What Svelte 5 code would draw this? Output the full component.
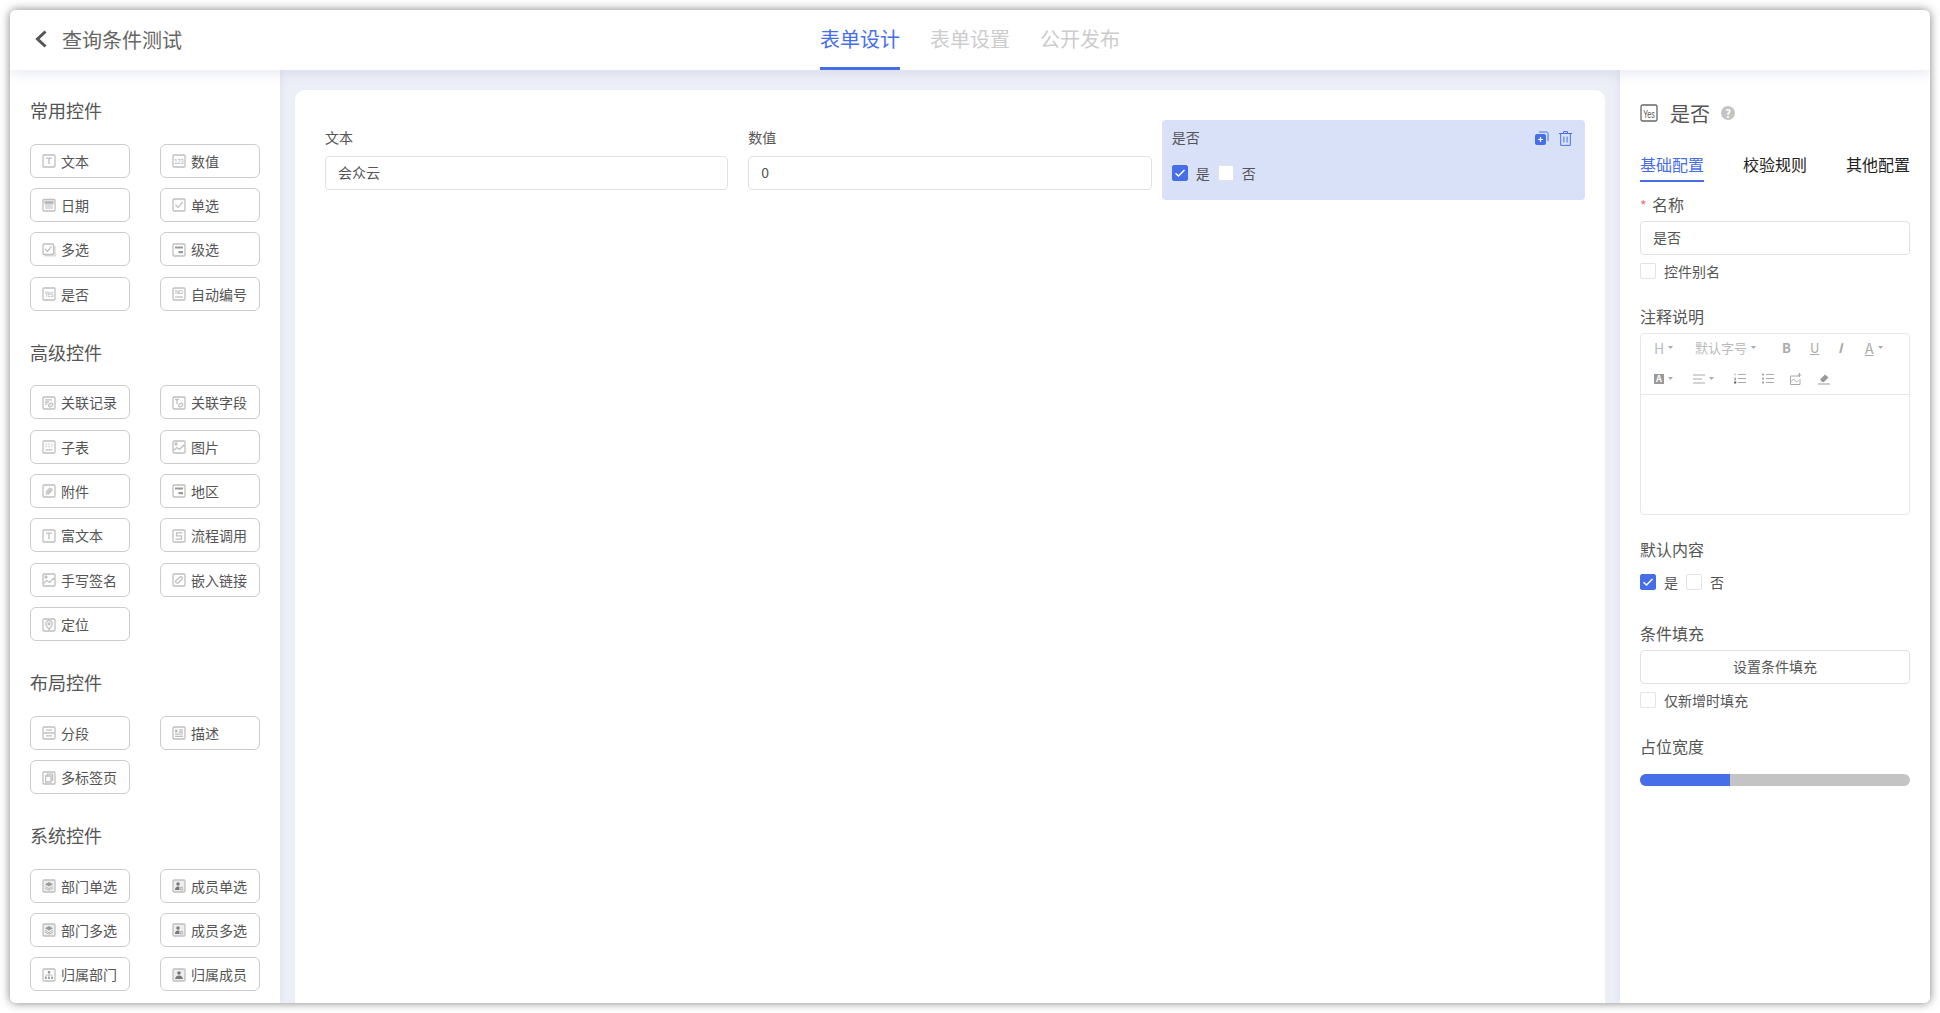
<script>
const icons = {
  text: '<rect x="1" y="1" width="12" height="12" rx="1"/><path d="M4 4.2h6M7 4.2v6"/>',
  num: '<rect x="1" y="1" width="12" height="12" rx="1"/><text transform="translate(7 9.8) scale(.75 1)" font-size="7.500" text-anchor="middle" fill="#aaa" stroke="none" font-family="Liberation Sans, sans-serif">123</text>',
  date: '<rect x="1" y="1.5" width="12" height="11.5" rx="1"/><path d="M3 3.500h8v2H3z" fill="#aaa"/><path d="M3 6h8v5H3z" fill="#ddd" stroke="none"/>',
  radio: '<rect x="1" y="1" width="12" height="12" rx="1"/><path d="M3.500 6.800l2.600 2.800 4.600-5.600"/>',
  multi: '<path d="M2.500 12.500h10.300V3" stroke-width="2" stroke="#ddd"/><rect x="1" y="1" width="10.500" height="10.500" rx="1"/><path d="M3 5.800l2.400 2.600 4-5"/>',
  cascade: '<rect x="1" y="1" width="12" height="12" rx="1"/><path d="M3 3.400h8v2.200H3zM6.500 8h4.500v2.200H6.500z" fill="#999" stroke="none"/>',
  yes: '<rect x="1" y="1" width="12" height="12" rx="1"/><text transform="translate(7 10) scale(.62 1)" font-size="8.500" text-anchor="middle" fill="#aaa" stroke="none" font-family="Liberation Sans, sans-serif">Yes</text>',
  no: '<rect x="1" y="1" width="12" height="12" rx="1"/><text x="7" y="7.400" font-size="5.500" text-anchor="middle" fill="#999" stroke="none" font-family="Liberation Sans, sans-serif">NO</text><path d="M3 10h8"/>',
  relRec: '<rect x="1" y="1" width="12" height="12" rx="1"/><path d="M3 3.800h7M3 6h4M3 8.200h2.500"/><rect x="6.500" y="7.600" width="4.400" height="2.800" rx="1.400" transform="rotate(-35 8.700 9)"/>',
  relField: '<rect x="1" y="1" width="12" height="12" rx="1"/><path d="M3 3.500h4M5 3.500v4.500"/><rect x="6.500" y="7.600" width="4.400" height="2.800" rx="1.400" transform="rotate(-35 8.700 9)"/>',
  table: '<rect x="1" y="1" width="12" height="12" rx="1"/><path d="M3.500 4h1M6.500 4h1M9.500 4h1M3.500 6.500h1M6.500 6.500h1M9.500 6.500h1M3.500 9.800h7"/>',
  image: '<rect x="1" y="1" width="12" height="12" rx="1"/><circle cx="4" cy="4" r="1"/><path d="M1.500 10.500l3.400-3 2.600 2 4-4 1.200 1"/>',
  attach: '<rect x="1" y="1" width="12" height="12" rx="1"/><path d="M4 10.500l5.800-6.200M3.800 8.400l4.400-4.800M6.200 10.400l4.400-4.800" />',
  flow: '<rect x="1" y="1" width="12" height="12" rx="1"/><path d="M10.500 3.800H4.500v3h5v3.400h-6"/>',
  link: '<rect x="1" y="1" width="12" height="12" rx="1"/><rect x="3" y="5.400" width="8" height="3.200" rx="1.600" transform="rotate(-40 7 7)"/>',
  locate: '<rect x="1" y="1" width="12" height="12" rx="1"/><path d="M7 11.200C5 9 3.800 7.400 3.800 5.800a3.200 3.200 0 016.400 0c0 1.600-1.200 3.200-3.200 5.400z"/><circle cx="7" cy="5.800" r="1"/>',
  section: '<rect x="1" y="1" width="12" height="12" rx="1"/><path d="M1.500 7h11M4 4.200h6M4 9.800h6"/>',
  desc: '<rect x="1" y="1" width="12" height="12" rx="1"/><path d="M7 3.800h4M7 6h4M3 8.200h8M3 10.400h8"/><path d="M3 3.500h2.500v3H3z" fill="#bbb" stroke="none"/>',
  tabs: '<rect x="1" y="1" width="12" height="12" rx="1"/><path d="M3.600 5v6h5.400V5zM5.200 5V3.200h5.400v6H9"/>',
  dept: '<rect x="1" y="1" width="12" height="12" rx="1" fill="#eee"/><path d="M7 3l4 2.200-4 2.200-4-2.200z" fill="#999" stroke="none"/><path d="M3 7.400l4 2.200 4-2.200M3 9.200l4 2 4-2" stroke="#aaa" stroke-width=".8"/>',
  member: '<rect x="1" y="1" width="12" height="12" rx="1" fill="#eee"/><circle cx="6" cy="5" r="1.700" fill="#777" stroke="none"/><path d="M3 11c0-2.400 1.200-3.600 3-3.600 1 0 1.400.3 1.400.3V11z" fill="#777" stroke="none"/><path d="M8.400 8.400h2.200V11H8.400z" stroke="#aaa" stroke-width=".8"/>',
  ownDept: '<rect x="1" y="1" width="12" height="12" rx="1"/><path d="M5.800 3h2.400v2.200H5.800zM3 8.800h1.800V11H3zM6.100 8.800h1.800V11H6.100zM9.200 8.800H11V11H9.200z" fill="#999" stroke="none"/><path d="M7 5v3.800M3.900 8.800V7h6.200v1.800" stroke="#aaa" stroke-width=".7"/>',
  ownMember: '<rect x="1" y="1" width="12" height="12" rx="1" fill="#eee"/><circle cx="7" cy="5" r="1.800" fill="#777" stroke="none"/><path d="M3.200 11c0-2.400 1.600-3.600 3.800-3.600s3.800 1.200 3.800 3.600z" fill="#777" stroke="none"/>'
};

const sections = [
  { title: '常用控件', items: [['文本', 'text'], ['数值', 'num'], ['日期', 'date'], ['单选', 'radio'], ['多选', 'multi'], ['级选', 'cascade'], ['是否', 'yes'], ['自动编号', 'no']] },
  { title: '高级控件', items: [['关联记录', 'relRec'], ['关联字段', 'relField'], ['子表', 'table'], ['图片', 'image'], ['附件', 'attach'], ['地区', 'cascade'], ['富文本', 'text'], ['流程调用', 'flow'], ['手写签名', 'image'], ['嵌入链接', 'link'], ['定位', 'locate']] },
  { title: '布局控件', items: [['分段', 'section'], ['描述', 'desc'], ['多标签页', 'tabs']] },
  { title: '系统控件', items: [['部门单选', 'dept'], ['成员单选', 'member'], ['部门多选', 'dept'], ['成员多选', 'member'], ['归属部门', 'ownDept'], ['归属成员', 'ownMember']] }
];

const topTabs = ['表单设计', '表单设置', '公开发布'];
const sideTabs = ['基础配置', '校验规则', '其他配置'];
</script>

{#snippet caret()}
  <svg class="caret" width="5" height="3" viewBox="0 0 5 3"><path d="M0 0h5L2.500 3z" fill="#aaa" /></svg>
{/snippet}

{#snippet yesNo()}
  <div class="yesno">
    <span class="check on">
      <svg width="12" height="10" viewBox="0 0 12 10"><path d="M1.500 5.200l3 2.800 6-6" fill="none" stroke="#fff" stroke-width="1.500" /></svg>
    </span>
    <span class="opt">是</span>
    <span class="check"></span>
    <span class="opt">否</span>
  </div>
{/snippet}

<div class="page">
  <div class="window">
    <header class="topbar">
      <div class="back">
        <svg width="14" height="18" viewBox="0 0 14 18"><path d="M11.500 1.500L3.500 9l8 7.500" fill="none" stroke="#555" stroke-width="3" /></svg>
        <span>查询条件测试</span>
      </div>
      <nav class="top-tabs">
        {#each topTabs as tab, i}
          <div class="top-tab" class:active={i === 0}>{tab}</div>
        {/each}
      </nav>
    </header>

    <main class="body">
      <aside class="palette">
        {#each sections as section}
          <section class="group">
            <h3>{section.title}</h3>
            <div class="grid">
              {#each section.items as item}
                <div class="ctl">
                  <svg width="14" height="14" viewBox="0 0 14 14" fill="none" stroke="#bfbfbf" stroke-width="1.300">{@html icons[item[1]]}</svg>
                  <span>{item[0]}</span>
                </div>
              {/each}
            </div>
          </section>
        {/each}
      </aside>

      <div class="canvas">
        <div class="card">
          <div class="row">
            <div class="field">
              <div class="label">文本</div>
              <div class="input">会众云</div>
            </div>
            <div class="field">
              <div class="label">数值</div>
              <div class="input">0</div>
            </div>
            <div class="field selected">
              <div class="label">是否</div>
              {@render yesNo()}
              <div class="actions">
                <svg width="15" height="15" viewBox="0 0 15 15"><path d="M5 1h7.500A1.500 1.500 0 0114 2.500V10" fill="none" stroke="#466ee8" stroke-width="1" /><rect x="1" y="3" width="11" height="11" rx="2" fill="#466ee8" /><path d="M6.500 6v5M4 8.500h5" stroke="#fff" stroke-width="1.200" /></svg>
                <svg width="13" height="15" viewBox="0 0 13 15" fill="none" stroke="#466ee8" stroke-width="1"><path d="M0 2.500h13M4.500 2.500V.6h4v1.900M1.700 2.500v11.900h9.600V2.500M4.900 5.500v6M8.100 5.500v6" /></svg>
              </div>
            </div>
          </div>
        </div>
      </div>

      <aside class="props">
        <div class="props-head">
          <svg width="18" height="18" viewBox="0 0 18 18" fill="none" stroke="#666" stroke-width="1.300"><rect x="1" y="1" width="16" height="16" rx="1.500" /><text transform="translate(9 13.500) scale(.65 1)" font-size="11" text-anchor="middle" fill="#555" stroke="none" font-family="Liberation Sans, sans-serif">Yes</text></svg>
          <span class="props-title">是否</span>
          <span class="help">?</span>
        </div>
        <div class="side-tabs">
          {#each sideTabs as tab, i}
            <div class="side-tab" class:active={i === 0}>{tab}</div>
          {/each}
        </div>

        <div class="prop-label name"><i>*</i>名称</div>
        <div class="input">是否</div>
        <div class="check-row"><span class="check"></span><span>控件别名</span></div>

        <div class="prop-label note">注释说明</div>
        <div class="editor">
          <div class="toolbar">
            <div class="tool-row first">
              <span class="tool h">H{@render caret()}</span>
              <span class="tool size">默认字号{@render caret()}</span>
              <span class="tool b">B</span>
              <span class="tool u">U</span>
              <span class="tool i">I</span>
              <span class="tool a">A{@render caret()}</span>
            </div>
            <div class="tool-row second">
              <span class="tool bg"><em>A</em>{@render caret()}</span>
              <span class="tool align">
                <svg width="12" height="10" viewBox="0 0 12 10" stroke="#aaa"><path d="M0 1h12M0 5h9M0 9h12" /></svg>{@render caret()}
              </span>
              <svg class="tool-ico ol" width="12" height="11" viewBox="0 0 12 11" stroke="#aaa"><path d="M4 1.500h8M4 5.500h8M4 9.500h8M1 .5v2M.5 5h1.500L.5 7h1.500M.5 8.500h1.500v2H.5" /></svg>
              <svg class="tool-ico" width="12" height="11" viewBox="0 0 12 11" stroke="#aaa"><path d="M4 1.500h8M4 5.500h8M4 9.500h8" /><path d="M0 .5h2v2H0zM0 4.500h2v2H0zM0 8.500h2v2H0z" fill="#aaa" stroke="none" /></svg>
              <svg class="tool-ico" width="12" height="12" viewBox="0 0 12 12" fill="none" stroke="#aaa"><path d="M9 3H.5v8.500H10V6" /><path d="M.5 9l3-3 3 3 2-1.500M9.500 0v4M7.500 2h4" /></svg>
              <svg class="tool-ico" width="12" height="12" viewBox="0 0 12 12"><path d="M2 6.500L7 1.500l3.500 3-4.500 4.500H4z" fill="#999" /><path d="M0 11h12" stroke="#999" /></svg>
            </div>
          </div>
        </div>

        <div class="prop-label def">默认内容</div>
        {@render yesNo()}

        <div class="prop-label cond">条件填充</div>
        <div class="input btn">设置条件填充</div>
        <div class="check-row"><span class="check"></span><span>仅新增时填充</span></div>

        <div class="prop-label span">占位宽度</div>
        <div class="slider"><div class="slider-fill" style="width: 33.33%"></div></div>
      </aside>
    </main>
  </div>
</div>

<style>
:global(body) {
  margin: 0;
  background: #fff;
  overflow: hidden;
}

.page {
  box-sizing: border-box;
  width: 1940px;
  height: 1013px;
  padding: 10px;
  font-family: "Noto Sans CJK SC", "Liberation Sans", sans-serif;
  font-size: 14px;
  color: #555;
}

.window {
  display: flex;
  flex-direction: column;
  height: 100%;
  overflow: hidden;
  border-radius: 6px;
  box-shadow: 0 0 10px rgba(0, 0, 0, 0.5);
}

.topbar {
  position: relative;
  z-index: 2;
  display: flex;
  flex: none;
  justify-content: center;
  height: 60px;
  background: #fff;
  box-shadow: 0 2px 14px rgba(90, 100, 160, 0.16);
}

.back {
  position: absolute;
  top: 0;
  bottom: 2px;
  left: 24px;
  display: flex;
  align-items: center;
  gap: 14px;
  font-size: 20px;
  color: #666;
}

.top-tabs {
  display: flex;
  gap: 30px;
}

.top-tab {
  box-sizing: border-box;
  height: 60px;
  padding-top: 15px;
  font-size: 20px;
  line-height: 28px;
  color: #ccc;
}

.top-tab.active {
  color: #466ee8;
  border-bottom: 3px solid #466ee8;
}

.body {
  display: flex;
  flex: 1;
  min-height: 0;
}

.palette {
  flex: none;
  box-sizing: border-box;
  width: 270px;
  padding: 27px 20px 0;
  background: #fff;
  box-shadow: 0 0 8px rgba(90, 100, 160, 0.12);
  z-index: 1;
}

.group {
  margin-bottom: 28px;
}

h3 {
  margin: 0 0 20.5px;
  font-size: 18px;
  font-weight: 400;
  line-height: 26px;
  color: #555;
}

.grid {
  display: grid;
  grid-template-columns: 100px 100px;
  column-gap: 30px;
  row-gap: 10.4px;
}

.ctl {
  display: flex;
  align-items: center;
  box-sizing: border-box;
  height: 34px;
  padding-left: 11px;
  gap: 5px;
  border: 1px solid #ccc;
  border-radius: 6px;
  color: #555;
  white-space: nowrap;
}

.ctl svg {
  margin-top: 1px;
}

.canvas {
  flex: 1;
  min-width: 0;
  padding: 20px 15px 0;
  background: #edeff7;
}

.card {
  height: 100%;
  box-sizing: border-box;
  padding: 30px 20px;
  background: #fff;
  border-radius: 10px 10px 0 0;
}

.row {
  display: grid;
  grid-template-columns: repeat(3, 1fr);
}

.field {
  box-sizing: border-box;
  padding: 7px 10px 0;
}

.field.selected {
  position: relative;
  height: 80px;
  background: #d9e1f9;
  border-radius: 4px;
}

.label {
  line-height: 20px;
  margin-bottom: 9px;
  color: #555;
}

.input {
  box-sizing: border-box;
  height: 34px;
  padding-left: 12px;
  line-height: 31px;
  background: #fff;
  border: 1px solid #e0e0e6;
  border-radius: 4px;
  color: #555;
}

.input.btn {
  padding-left: 0;
  text-align: center;
}

.actions {
  position: absolute;
  top: 11px;
  right: 13px;
  display: flex;
  gap: 10px;
}

.yesno {
  display: flex;
  align-items: center;
  height: 16px;
}

.field .yesno {
  margin-top: 18px;
}

.check {
  display: flex;
  flex: none;
  align-items: center;
  justify-content: center;
  box-sizing: border-box;
  width: 16px;
  height: 16px;
  background: #fff;
  border: 1px solid #e2e2e8;
  border-radius: 2px;
}

.check.on {
  background: #466ee8;
  border-color: #466ee8;
}

.opt {
  margin: 0 8px;
  line-height: 16px;
}

.props {
  flex: none;
  box-sizing: border-box;
  width: 310px;
  padding: 31px 20px 0;
  background: #fff;
  box-shadow: 0 0 8px rgba(90, 100, 160, 0.12);
  z-index: 1;
}

.props-head {
  display: flex;
  align-items: center;
  height: 24px;
}

.props-title {
  margin-left: 12px;
  font-size: 20px;
  color: #555;
}

.help {
  width: 14px;
  height: 14px;
  margin-left: 11px;
  font-size: 11px;
  font-weight: 700;
  line-height: 14px;
  text-align: center;
  color: #fff;
  background: #c4c4c4;
  border-radius: 50%;
}

.side-tabs {
  display: flex;
  justify-content: space-between;
  margin-top: 27px;
}

.side-tab {
  box-sizing: border-box;
  height: 30px;
  font-size: 16px;
  line-height: 24px;
  color: #222;
}

.side-tab.active {
  color: #466ee8;
  border-bottom: 2px solid #466ee8;
}

.prop-label {
  font-size: 16px;
  line-height: 24px;
  color: #555;
}

.prop-label i {
  display: inline-block;
  width: 12px;
  font-style: normal;
  font-size: 14px;
  color: #f56c6c;
}

.prop-label.name {
  margin-top: 10px;
  margin-bottom: 4px;
}

.prop-label.note {
  margin-top: 25px;
  margin-bottom: 5px;
}

.prop-label.def {
  margin-top: 22px;
  margin-bottom: 13px;
}

.prop-label.cond {
  margin-top: 31px;
  margin-bottom: 5px;
}

.prop-label.span {
  margin-top: 26px;
  margin-bottom: 16px;
}

.check-row {
  display: flex;
  align-items: center;
  gap: 8px;
  height: 16px;
  margin-top: 8px;
  color: #555;
}

.editor {
  box-sizing: border-box;
  height: 182px;
  border: 1px solid #e6e6eb;
  border-radius: 4px;
}

.toolbar {
  box-sizing: border-box;
  height: 61px;
  padding: 0 13px;
  border-bottom: 1px solid #e6e6eb;
  color: #aaa;
}

.tool-row {
  display: flex;
  align-items: center;
}

.tool-row.first {
  height: 27px;
}

.tool-row.second {
  height: 31px;
  margin-top: 2px;
}

.tool {
  display: flex;
  align-items: center;
  gap: 4px;
  white-space: nowrap;
}

.tool.h {
  width: 41px;
  font-size: 14px;
  color: #b4bccf;
}

.tool.size {
  width: 87px;
  font-size: 13px;
  color: #bbb;
}

.tool.b {
  width: 28px;
  font-weight: 700;
  font-size: 13px;
}

.tool.u {
  width: 28px;
  font-size: 13px;
  text-decoration: underline;
}

.tool.i {
  width: 27px;
  font-style: italic;
  font-weight: 700;
  font-size: 13px;
}

.tool.a {
  font-size: 14px;
  text-decoration: underline;
}

.tool.bg {
  width: 39px;
}

.tool.bg em {
  display: block;
  width: 10px;
  height: 10px;
  font-size: 9px;
  font-style: normal;
  font-weight: 700;
  line-height: 10px;
  text-align: center;
  color: #fff;
  background: #999;
}

.tool.align {
  width: 41px;
}

.tool-ico {
  margin-right: 16px;
}

.slider {
  height: 12px;
  overflow: hidden;
  background: #c4c4c4;
  border-radius: 6px;
}

.slider-fill {
  height: 100%;
  background: #466ee8;
}
</style>
